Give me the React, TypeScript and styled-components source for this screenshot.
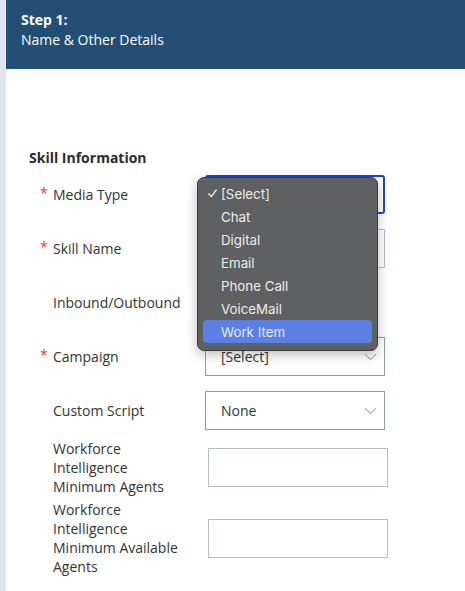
import React from "react";
import styled, { createGlobalStyle } from "styled-components";

const Global = createGlobalStyle`
  html, body { margin: 0; padding: 0; background: #ffffff; }
  body { font-family: "Open Sans", "Noto Sans", sans-serif; color: #333; }
  * { box-sizing: border-box; }
`;

const Page = styled.div`
  display: flex;
  width: 465px;
  min-height: 591px;
  overflow: hidden;
`;

const SideStrip = styled.div`
  width: 6px;
  flex: 0 0 6px;
  background: #dee5ef;
`;

const Main = styled.div`
  flex: 1;
  display: flex;
  flex-direction: column;
`;

const Header = styled.div`
  height: 69px;
  background: #234f75;
  color: #ffffff;
  padding: 10px 15px;
  font-size: 14px;
  line-height: 20px;
`;

const StepTitle = styled.div`
  font-weight: 700;
`;

const Content = styled.div`
  padding: 80px 0 0 23px;
`;

const SectionTitle = styled.div`
  font-weight: 700;
  font-size: 14px;
  line-height: 18px;
  color: #2b2b2b;
  margin-bottom: 8px;
`;

const Row = styled.div<{ $mt: number }>`
  display: flex;
  align-items: center;
  margin-top: ${(p) => p.$mt}px;
  margin-left: 11px;
  min-height: 39px;
`;

const Asterisk = styled.span`
  width: 13px;
  flex: 0 0 13px;
  color: #e8412f;
  font-size: 14px;
  position: relative;
  top: -2px;
`;

const Label = styled.div`
  width: 152px;
  flex: 0 0 152px;
  font-size: 14px;
  line-height: 19px;
  color: #333;
  padding-right: 12px;
`;

const SelectWrap = styled.div`
  position: relative;
`;

const SelectBox = styled.div<{ $focused?: boolean }>`
  width: 180px;
  height: 39px;
  border: ${(p) => (p.$focused ? "2px solid #1b45c6" : "1px solid #8d9db0")};
  border-radius: ${(p) => (p.$focused ? "3px" : "0")};
  display: flex;
  align-items: center;
  justify-content: space-between;
  padding: 0 7px 0 15px;
  font-size: 14px;
  color: #333;
  background: #fff;
`;

const Chevron = styled.svg`
  width: 13px;
  height: 8px;
`;

const TextInput = styled.div<{ $offset?: number }>`
  width: 180px;
  height: 39px;
  margin-left: ${(p) => p.$offset ?? 0}px;
  border: 1px solid #b2bec8;
  background: #fff;
`;

const Menu = styled.div`
  position: absolute;
  left: -8px;
  top: 2px;
  width: 181px;
  padding: 4px 5px 7px 5px;
  background: #5f6062;
  border: 1px solid #3b3c3d;
  border-radius: 7px;
  box-shadow: 0 4px 12px rgba(0, 0, 0, 0.25);
  font-family: "Inter", "Liberation Sans", sans-serif;
  z-index: 10;
`;

const MenuItem = styled.div<{ $active?: boolean }>`
  display: flex;
  align-items: center;
  height: 23px;
  font-size: 13.3px;
  color: #ececec;
  border-radius: 4px;
  background: ${(p) => (p.$active ? "#5b7fe2" : "transparent")};
`;

const CheckSlot = styled.span`
  width: 18px;
  flex: 0 0 18px;
  display: flex;
  justify-content: center;
  padding-left: 1px;
`;

const CheckIcon = styled.svg`
  width: 9px;
  height: 9px;
`;

const ChevronIcon = () => (
  <Chevron viewBox="0 0 13 8">
    <path d="M1 1.2 L6.5 6.5 L12 1.2" fill="none" stroke="#a4adb7" strokeWidth="1.1" />
  </Chevron>
);

const menuItems = ["[Select]", "Chat", "Digital", "Email", "Phone Call", "VoiceMail", "Work Item"];

export default function App() {
  return (
    <>
      <Global />
      <Page>
        <SideStrip />
        <Main>
          <Header>
            <StepTitle>Step 1:</StepTitle>
            <div>Name &amp; Other Details</div>
          </Header>
          <Content>
            <SectionTitle>Skill Information</SectionTitle>
            <Row $mt={0}>
              <Asterisk>*</Asterisk>
              <Label>Media Type</Label>
              <SelectWrap>
                <SelectBox $focused>
                  <span>[Select]</span>
                </SelectBox>
                <Menu>
                  {menuItems.map((m, i) => (
                    <MenuItem key={m} $active={i === menuItems.length - 1}>
                      <CheckSlot>
                        {i === 0 && (
                          <CheckIcon viewBox="0 0 9 9">
                            <path d="M0.8 4.8 L3.3 7.6 L8.2 1" fill="none" stroke="#ececec" strokeWidth="1.3" strokeLinecap="round" strokeLinejoin="round" />
                          </CheckIcon>
                        )}
                      </CheckSlot>
                      <span>{m}</span>
                    </MenuItem>
                  ))}
                </Menu>
              </SelectWrap>
            </Row>
            <Row $mt={15}>
              <Asterisk>*</Asterisk>
              <Label>Skill Name</Label>
              <TextInput />
            </Row>
            <Row $mt={15}>
              <Asterisk />
              <Label>Inbound/Outbound</Label>
            </Row>
            <Row $mt={15}>
              <Asterisk>*</Asterisk>
              <Label>Campaign</Label>
              <SelectBox>
                <span>[Select]</span>
                <ChevronIcon />
              </SelectBox>
            </Row>
            <Row $mt={15}>
              <Asterisk />
              <Label>Custom Script</Label>
              <SelectBox>
                <span>None</span>
                <ChevronIcon />
              </SelectBox>
            </Row>
            <Row $mt={9}>
              <Asterisk />
              <Label>Workforce Intelligence Minimum Agents</Label>
              <TextInput $offset={3} />
            </Row>
            <Row $mt={4}>
              <Asterisk />
              <Label>Workforce Intelligence Minimum Available Agents</Label>
              <TextInput $offset={3} />
            </Row>
          </Content>
        </Main>
      </Page>
    </>
  );
}
